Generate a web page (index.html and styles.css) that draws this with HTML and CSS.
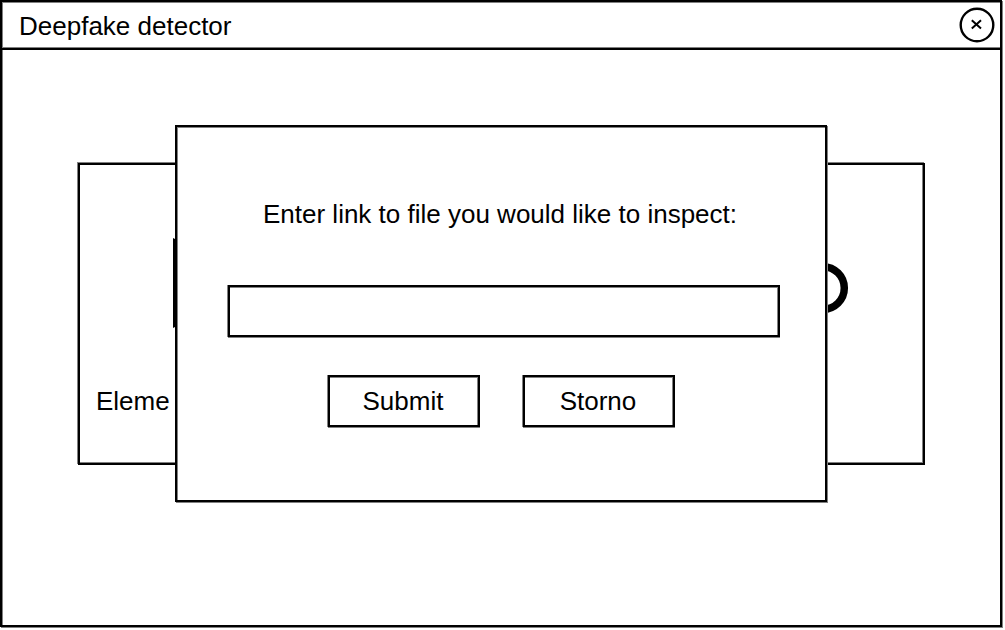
FILE: index.html
```html
<!DOCTYPE html>
<html lang="en">
<head>
<meta charset="utf-8">
<title>Deepfake detector</title>
<link rel="stylesheet" href="styles.css">
</head>
<body>
<div class="window">
  <header class="titlebar">
    <h1 class="title">Deepfake detector</h1>
    <button class="close" type="button" aria-label="Close">
      <svg class="close-icon" viewBox="0 0 36 36" aria-hidden="true">
        <circle cx="18" cy="18" r="16.3" fill="none" stroke="#000" stroke-width="2.4"/>
        <path d="M12.8 13.2L22 21.6M22 13.2L12.8 21.6" fill="none" stroke="#000" stroke-width="2"/>
      </svg>
    </button>
  </header>
  <main class="content">
    <section class="panel">
      <div class="icons">
        <svg class="icon" viewBox="0 0 90 90" aria-hidden="true">
          <path d="M0 0L2 1V89L0 90Z"/>
          <path d="M2 2H60V88H2Z"/>
        </svg>
        <svg class="icon" viewBox="0 0 90 90" aria-hidden="true">
          <circle cx="63" cy="50" r="21.3" fill="none" stroke="#000" stroke-width="7.5"/>
        </svg>
      </div>
      <p class="caption">Eleme</p>
    </section>
  </main>
  <div class="overlay">
    <form class="dialog" role="dialog" aria-modal="true">
      <label class="prompt" for="link">Enter link to file you would like to inspect:</label>
      <input class="field" id="link" type="text">
      <div class="actions">
        <button class="action" type="submit">Submit</button>
        <button class="action" type="button">Storno</button>
      </div>
    </form>
  </div>
</div>
</body>
</html>
```
FILE: styles.css
```css
* {
  box-sizing: border-box;
}

body {
  margin: 0;
  padding: 0 3px 3px 0;
  min-height: 100vh;
  display: flex;
  background: #fff;
  color: #000;
  font-family: "Liberation Sans", Arial, sans-serif;
  font-size: 26px;
  line-height: 30px;
}

.window {
  position: relative;
  flex: 1;
  border: 2px solid #000;
  box-shadow: 1px 1px 0 #808080, inset 1px 1px 0 #808080;
}

.titlebar {
  display: flex;
  align-items: center;
  justify-content: space-between;
  height: 48px;
  padding: 0 5px 0 17px;
  border-bottom: 2px solid #000;
  box-shadow: inset 0 -1px 0 #808080;
}

.title {
  margin: 0;
  padding-top: 2px;
  font-size: inherit;
  font-weight: 400;
}

.close {
  display: flex;
  padding: 0;
  border: 0;
  background: none;
}

.close-icon {
  width: 36px;
  height: 36px;
}

.content {
  padding: 113px 75px 0 76px;
}

.panel {
  padding: 73px 73px 47px 16px;
  border: 2px solid #000;
  box-shadow: -1px -1px 0 #808080, inset -1px -1px 0 #808080;
}

.icons {
  display: flex;
  justify-content: space-between;
  padding-left: 77px;
}

.icon {
  width: 90px;
  height: 90px;
}

.caption {
  margin: 58px 0 0;
}

.overlay {
  position: absolute;
  inset: 0;
  display: flex;
  align-items: center;
  justify-content: center;
}

.dialog {
  display: flex;
  flex-direction: column;
  width: 652px;
  max-width: 100%;
  padding: 72px 45px 73px 51px;
  border: 2px solid #000;
  background: #fff;
  box-shadow: 1px 1px 0 #808080, inset 1px 1px 0 #808080;
}

.prompt {
  padding-right: 8px;
  text-align: center;
}

.field,
.action {
  height: 52px;
  border: 2px solid #000;
  border-radius: 0;
  background: #fff;
  color: inherit;
  font: inherit;
  box-shadow: -1px 0 0 #808080, 0 1px 0 #808080, inset -1px 1px 0 #808080;
}

.field {
  width: 100%;
  margin: 56px 0 38px;
  padding: 0 12px;
}

.action {
  width: 152px;
  padding: 0 2px 0 0;
}

.actions {
  display: flex;
  justify-content: center;
  gap: 43px;
  padding-right: 5px;
}
```
